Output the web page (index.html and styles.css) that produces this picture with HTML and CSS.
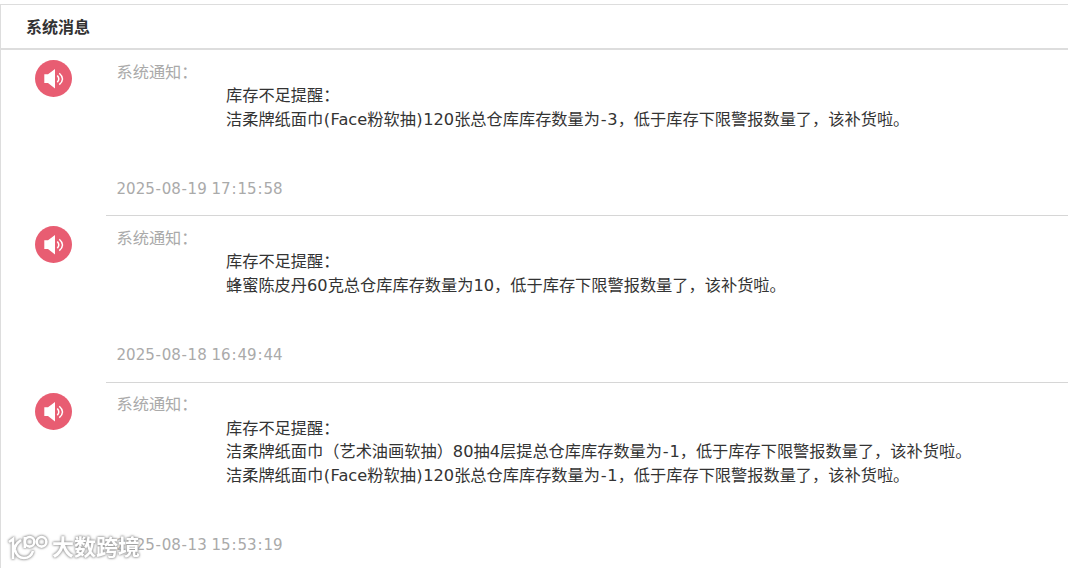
FILE: index.html
```html
<!DOCTYPE html>
<html lang="zh-CN">
<head>
  <meta charset="UTF-8" />
  <title>系统消息</title>
  <link rel="stylesheet" href="styles.css">
</head>

<body>
  <svg class="defs" width="0" height="0">
    <symbol id="speaker" viewBox="0 0 37 37">
      <circle cx="18.5" cy="18.5" r="18.5" fill="#e85d72" />
      <path d="M9.3 14.3h3.7l7-5.3v19.4l-7-5.3H9.3z" fill="#fff" />
      <path d="M22.3 15.5q3 3.4 0 6.8M24.3 13.2q6.4 5.7 0 11.4" fill="none" stroke="#fff" stroke-width="1.5" />
    </symbol>
  </svg>

  <div class="panel">
    <h2 class="panel-title">系统消息</h2>

    <div class="message">
      <svg class="icon"><use href="#speaker" /></svg>
      <div class="message-main">
        <div class="label">系统通知：</div>
        <div class="content">库存不足提醒：<br />洁柔牌纸面巾<b>(</b>Face粉软抽<b>)</b>120张总仓库库存数量为<b>-</b>3，低于库存下限警报数量了，该补货啦。</div>
        <div class="time">2025<b>-</b>08<b>-</b>19 17<b>:</b>15<b>:</b>58</div>
      </div>
    </div>

    <div class="message">
      <svg class="icon"><use href="#speaker" /></svg>
      <div class="message-main">
        <div class="label">系统通知：</div>
        <div class="content">库存不足提醒：<br />蜂蜜陈皮丹60克总仓库库存数量为10，低于库存下限警报数量了，该补货啦。</div>
        <div class="time">2025<b>-</b>08<b>-</b>18 16<b>:</b>49<b>:</b>44</div>
      </div>
    </div>

    <div class="message">
      <svg class="icon"><use href="#speaker" /></svg>
      <div class="message-main">
        <div class="label">系统通知：</div>
        <div class="content">库存不足提醒：<br />洁柔牌纸面巾（艺术油画软抽）80抽4层提总仓库库存数量为<b>-</b>1，低于库存下限警报数量了，该补货啦。<br />洁柔牌纸面巾<b>(</b>Face粉软抽<b>)</b>120张总仓库库存数量为<b>-</b>1，低于库存下限警报数量了，该补货啦。</div>
        <div class="time">2025<b>-</b>08<b>-</b>13 15<b>:</b>53<b>:</b>19</div>
      </div>
    </div>
  </div>

  <div class="watermark">
    <svg class="watermark-logo" viewBox="0 0 40 30">
      <path d="M1 9l4-3v20M13 7Q6 12 7 17q2 8 9 8 7 0 9-7" />
      <path d="M16.8 4v11" />
      <circle cx="21.6" cy="8.8" r="4.8" />
      <circle cx="33.6" cy="8.8" r="4.8" />
    </svg>
    <span>大数跨境</span>
  </div>
</body>
</html>
```

FILE: styles.css
```css
* { box-sizing: border-box; }
body {
  margin: 0;
  height: 568px;
  overflow: hidden;
  background: #fff;
  color: #333;
  font-family: "DejaVu Sans", "Noto Sans CJK SC", sans-serif;
  font-size: 16.22px;
  line-height: 23.4px;
}
.defs { display: block; }
.panel {
  margin-top: 4px;
  border-top: 1px solid #ddd;
  border-left: 1px solid #ddd;
}
.panel-title {
  margin: 0;
  height: 45px;
  padding-left: 25px;
  border-bottom: 2px solid #ddd;
  font-size: 16px;
  line-height: 45px;
}
.message { display: flex; height: 166.4px; }
.message:last-child { height: 200px; }
.icon { width: 37px; height: 37px; margin: 10px 34px 0; flex: none; }
.message-main {
  flex: 1;
  display: flex;
  flex-direction: column;
  padding: 10.7px 0 0 10.5px;
  border-bottom: 1px solid #d6d6d6;
  white-space: nowrap;
}
.label { color: #aaa; }
.content { margin-left: 109.5px; padding-bottom: 47px; }
.time { color: #aaa; font-size: 15.05px; }
/* wider separators in dates and numbers */
b {
  display: inline-block;
  width: 0.454em;
  font-weight: normal;
  line-height: 1;
  text-align: center;
}
.watermark {
  position: absolute;
  left: 8px;
  top: 532px;
  display: flex;
  align-items: center;
  gap: 4px;
  color: #fff;
  font-size: 22px;
  font-weight: bold;
  line-height: 32px;
  filter: drop-shadow(0 0 1px #999) drop-shadow(0 0 1px #aaa);
}
.watermark-logo {
  width: 40px;
  height: 30px;
  fill: none;
  stroke: #fff;
  stroke-width: 2.6;
}
```
